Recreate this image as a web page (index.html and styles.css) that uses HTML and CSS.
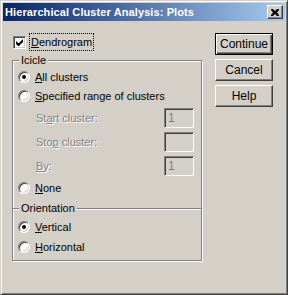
FILE: index.html
```html
<!DOCTYPE html>
<html lang="en">
<head>
  <meta charset="UTF-8" />
  <title>Hierarchical Cluster Analysis: Plots</title>
  <link rel="stylesheet" href="styles.css">
</head>
<body>
  <div class="window">
    <div class="titlebar">
      <span class="title">Hierarchical Cluster Analysis: Plots</span>
      <button class="close" aria-label="Close">
        <svg width="8" height="7" viewBox="0 0 8 7">
          <path d="M0 0h2l2 2 2-2h2v1l-2 2.5 2 2.5v1h-2l-2-2-2 2h-2v-1l2-2.5-2-2.5z" fill="#000"/>
        </svg>
      </button>
    </div>

    <div class="client">
      <div class="left">
        <div class="check-row">
          <span class="checkbox">
            <svg width="7" height="7" viewBox="0 0 7 7">
              <path d="M0 2v3l2 2h1l4-4v-3l-4 4h-1z" fill="#000"/>
            </svg>
          </span>
          <span class="focus"><u>D</u>endrogram</span>
        </div>

        <div class="group">
          <span class="legend">Icicle</span>
          <div class="opt first"><span class="radio on"></span><span><u>A</u>ll clusters</span></div>
          <div class="opt"><span class="radio"></span><span><u>S</u>pecified range of clusters</span></div>
          <div class="field"><span class="dis">St<u>a</u>rt cluster:</span><span class="textbox">1</span></div>
          <div class="field"><span class="dis">Sto<u>p</u> cluster:</span><span class="textbox"></span></div>
          <div class="field"><span class="dis"><u>B</u>y:</span><span class="textbox">1</span></div>
          <div class="opt"><span class="radio"></span><span><u>N</u>one</span></div>

          <div class="sep"><span class="legend">Orientation</span></div>
          <div class="opt after-sep"><span class="radio on"></span><span><u>V</u>ertical</span></div>
          <div class="opt"><span class="radio"></span><span><u>H</u>orizontal</span></div>
        </div>
      </div>

      <div class="buttons">
        <button class="btn default">Continue</button>
        <button class="btn">Cancel</button>
        <button class="btn">Help</button>
      </div>
    </div>
  </div>
</body>
</html>
```

FILE: styles.css
```css
body {
  margin: 0;
  font-family: "Liberation Sans", Arial, sans-serif;
  font-size: 11px;
  color: #000;
  background: #d4d0c8;
}

.window {
  box-sizing: border-box;
  width: 288px;
  height: 295px;
  background: #d4d0c8;
  border: 1px solid;
  border-color: #d4d0c8 #404040 #404040 #d4d0c8;
  box-shadow: inset 1px 1px 0 #fff, inset -1px -1px 0 #808080;
  padding: 2px;
}

.titlebar {
  height: 18px;
  display: flex;
  align-items: center;
  justify-content: space-between;
  padding: 0 2px 0 2px;
  background: linear-gradient(to right, #0a246a, #a6caf0);
}

.title {
  color: #fff;
  font-weight: bold;
  font-size: 11px;
  letter-spacing: 0.1px;
}

.close {
  box-sizing: border-box;
  width: 16px;
  height: 14px;
  padding: 0;
  display: flex;
  align-items: center;
  justify-content: center;
  background: #d4d0c8;
  border: 1px solid;
  border-color: #fff #404040 #404040 #fff;
  box-shadow: inset -1px -1px 0 #808080;
}

.client {
  display: flex;
  padding-left: 9px;
}

.left {
  width: 190px;
}

.check-row {
  display: flex;
  align-items: center;
  margin-top: 12px;
  height: 18px;
}

.checkbox {
  box-sizing: border-box;
  width: 13px;
  height: 13px;
  margin: 0 3px 0 1px;
  display: flex;
  align-items: center;
  justify-content: center;
  background: #fff;
  border: 1px solid;
  border-color: #808080 #fff #fff #808080;
  box-shadow: inset 1px 1px 0 #404040, inset -1px -1px 0 #d4d0c8;
}

.focus {
  box-sizing: border-box;
  height: 18px;
  line-height: 16px;
  padding: 0 1px;
  border: 1px dotted #000;
}

.group {
  position: relative;
  margin-top: 9px;
  padding: 6px 0 3px;
  border: 1px solid #808080;
  box-shadow: 1px 1px 0 #fff, inset 1px 1px 0 #fff;
}

.legend {
  position: absolute;
  top: -7px;
  left: 6px;
  padding: 0 2px;
  line-height: 13px;
  background: #d4d0c8;
}

.opt {
  display: flex;
  align-items: center;
  height: 20px;
  padding-left: 5px;
  gap: 5px;
}

.opt.first {
  height: 19px;
}

.radio {
  position: relative;
  box-sizing: border-box;
  width: 12px;
  height: 12px;
  border-radius: 50%;
  background: #fff;
  border: 1px solid;
  border-color: #808080 #fff #fff #808080;
  box-shadow: inset 1px 1px 0 #404040, inset -1px -1px 0 #d4d0c8;
}

.radio.on::after {
  content: "";
  position: absolute;
  left: 3px;
  top: 3px;
  width: 4px;
  height: 4px;
  border-radius: 50%;
  background: #000;
}

.field {
  display: flex;
  align-items: center;
  height: 24px;
  padding-left: 23px;
}

.dis {
  width: 128px;
  color: #808080;
  text-shadow: 1px 1px 0 #fff;
}

.textbox {
  box-sizing: border-box;
  width: 30px;
  height: 20px;
  padding: 2px 0 0 3px;
  color: #808080;
  font-size: 12px;
  background: #d4d0c8;
  border: 1px solid;
  border-color: #808080 #fff #fff #808080;
  box-shadow: inset 1px 1px 0 #404040, inset -1px -1px 0 #d4d0c8;
}

.sep {
  position: relative;
  margin-top: 10px;
  border-top: 1px solid #808080;
  border-bottom: 1px solid #fff;
}

.opt.after-sep {
  margin-top: 7px;
}

.buttons {
  display: flex;
  flex-direction: column;
  gap: 4px;
  margin: 12px 0 0 13px;
}

.btn {
  box-sizing: border-box;
  width: 58px;
  height: 22px;
  padding: 0;
  font-family: inherit;
  font-size: 12px;
  color: #000;
  background: #d4d0c8;
  border: 1px solid;
  border-color: #fff #404040 #404040 #fff;
  box-shadow: inset -1px -1px 0 #808080;
}

.btn.default {
  border: 1px solid #000;
  box-shadow: inset 1px 1px 0 #fff, inset -1px -1px 0 #404040, inset -2px -2px 0 #808080;
}
```
